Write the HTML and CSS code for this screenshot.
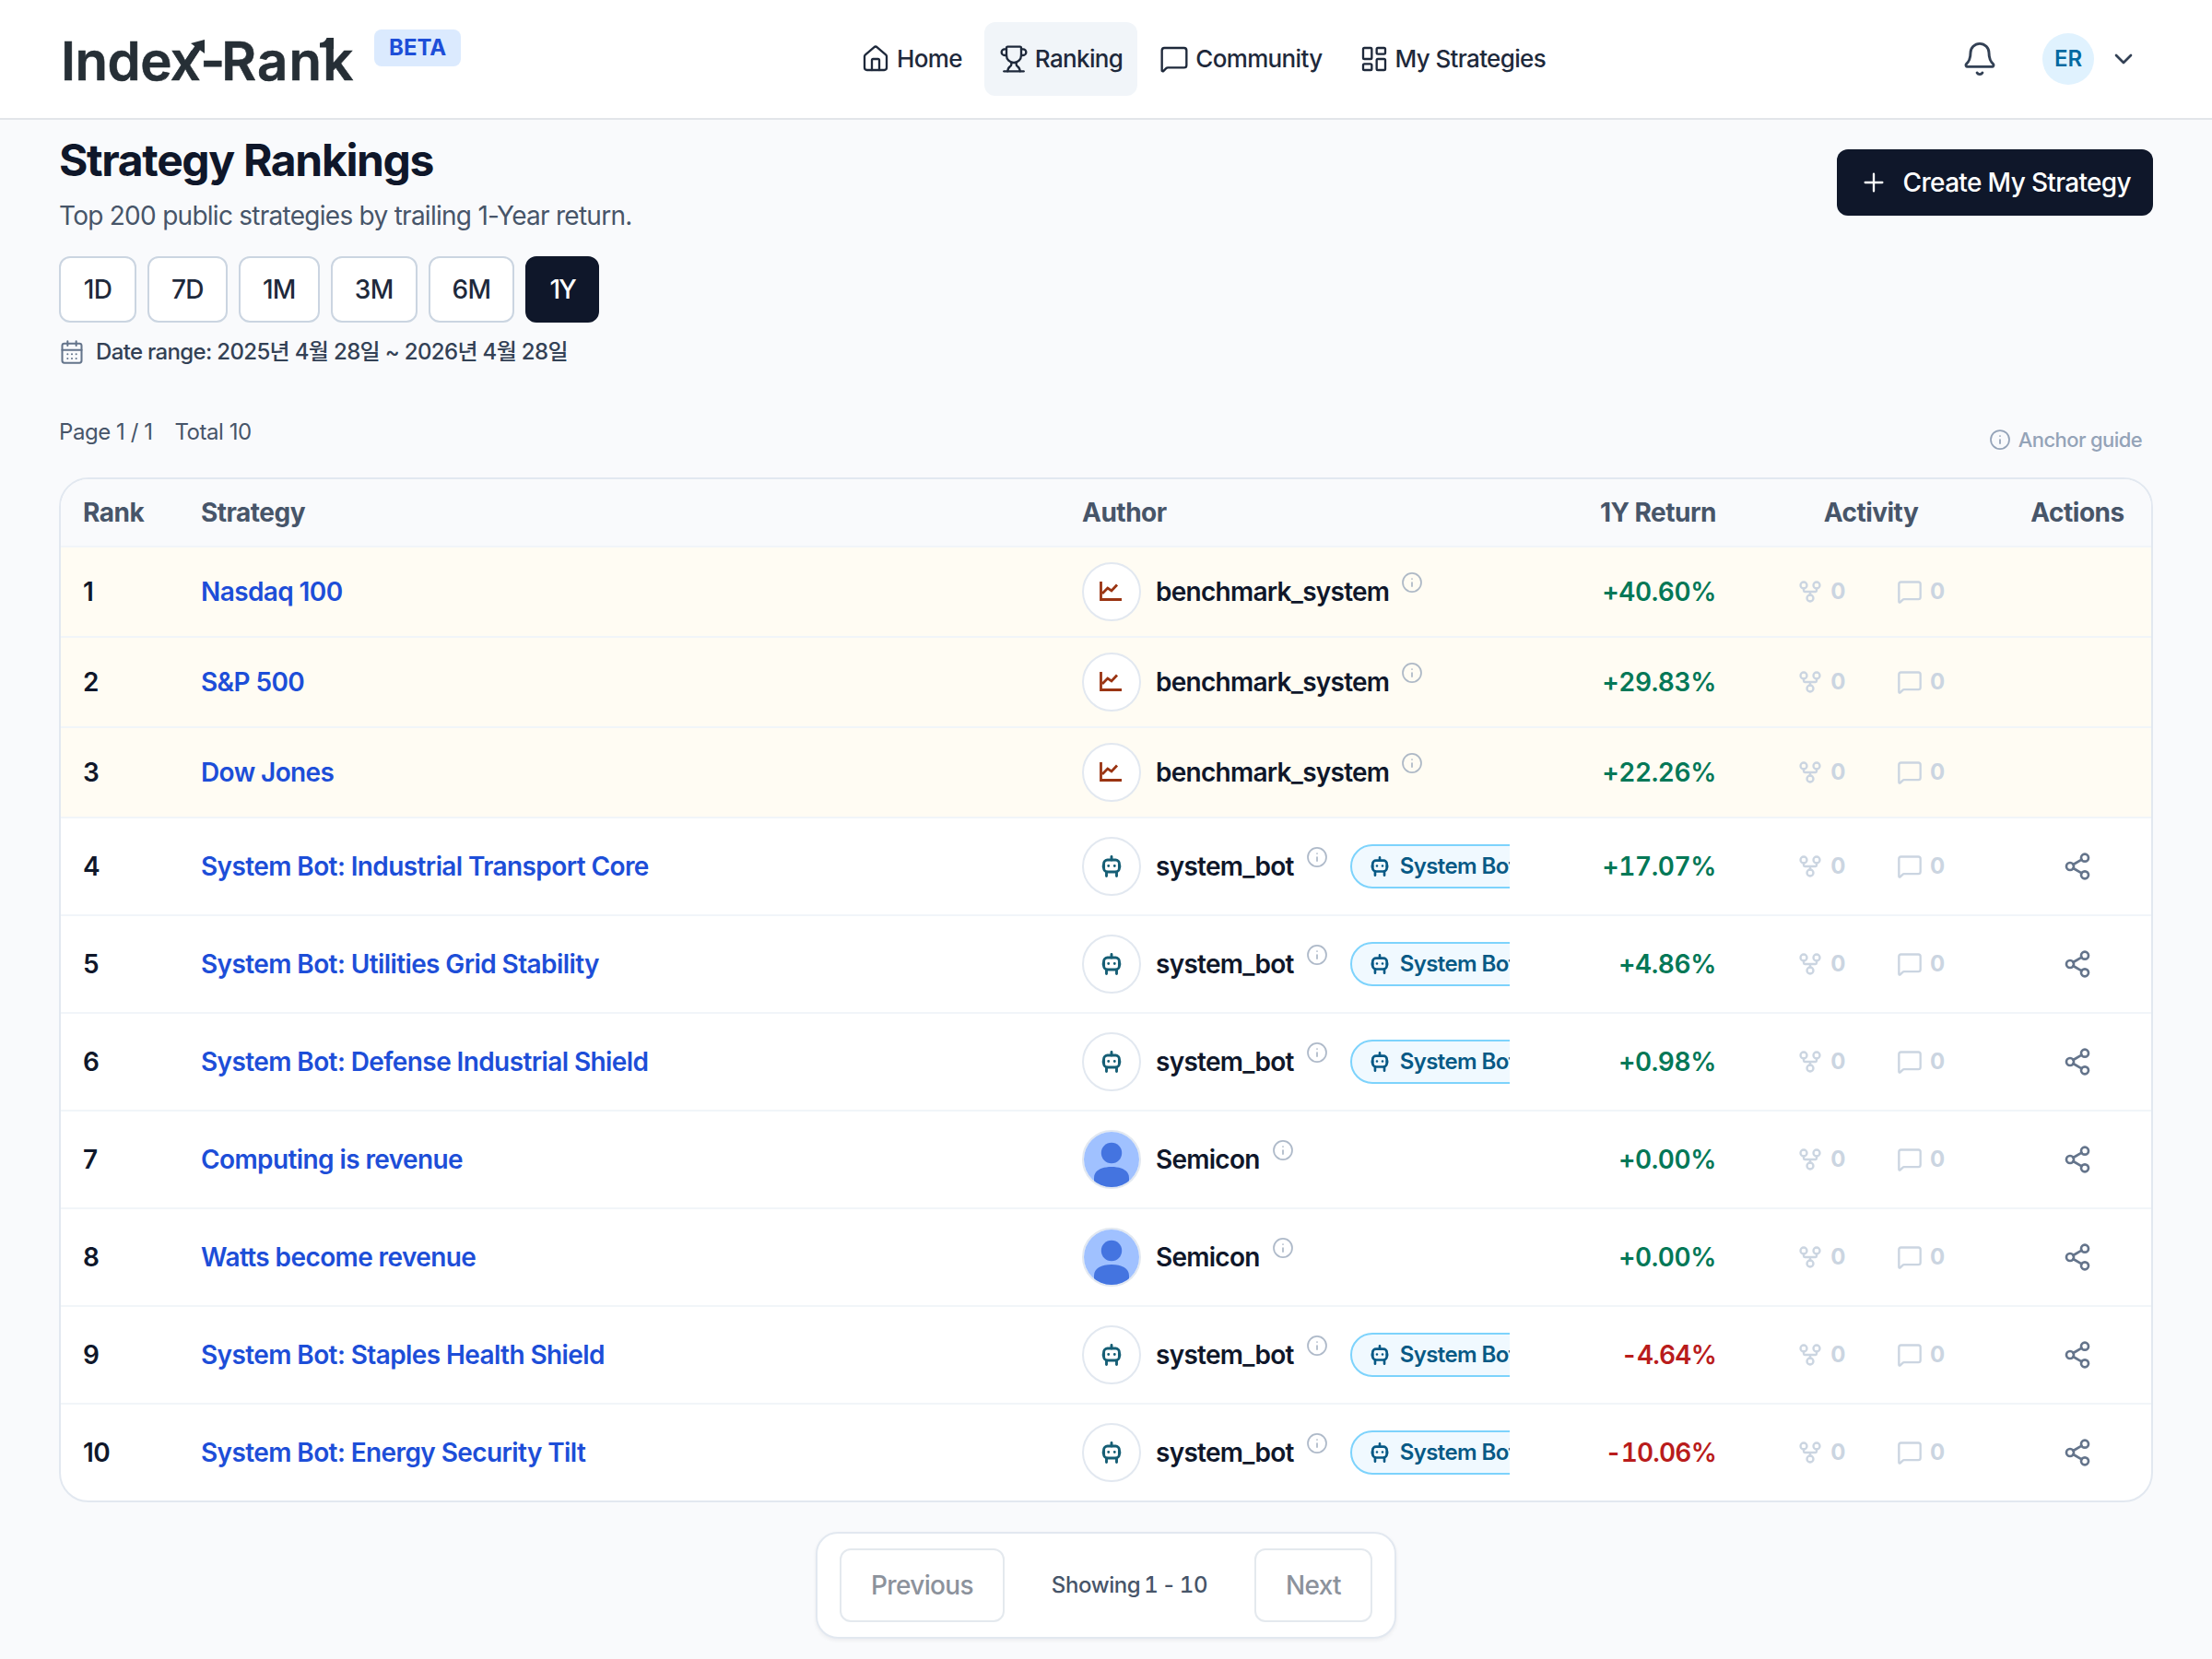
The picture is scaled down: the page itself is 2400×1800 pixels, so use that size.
FILE: index.html
```
<!DOCTYPE html>
<html lang="en">
<head>
  <meta charset="UTF-8">
  <meta name="viewport" content="width=device-width, initial-scale=1.0">
  <title>Index-Rank | Strategy Rankings</title>
  <link rel="stylesheet" href="styles.css">
</head>
<body>
  <!-- Icon sprite -->
  <svg class="sprite" xmlns="http://www.w3.org/2000/svg">
    <symbol id="i-home" viewBox="0 0 24 24"><path d="M15 21v-8a1 1 0 0 0-1-1h-4a1 1 0 0 0-1 1v8"/><path d="M3 10a2 2 0 0 1 .709-1.528l7-6a2 2 0 0 1 2.582 0l7 6A2 2 0 0 1 21 10v9a2 2 0 0 1-2 2H5a2 2 0 0 1-2-2z"/></symbol>
    <symbol id="i-trophy" viewBox="0 0 24 24"><path d="M10 14.66v1.626a2 2 0 0 1-.976 1.696A5 5 0 0 0 7 21.978"/><path d="M14 14.66v1.626a2 2 0 0 0 .976 1.696A5 5 0 0 1 17 21.978"/><path d="M18 9h1.5a1 1 0 0 0 0-5H18"/><path d="M4 22h16"/><path d="M6 9a6 6 0 0 0 12 0V3a1 1 0 0 0-1-1H7a1 1 0 0 0-1 1z"/><path d="M6 9H4.500a1 1 0 0 1 0-5H6"/></symbol>
    <symbol id="i-chat" viewBox="0 0 24 24"><path d="M22 17a2 2 0 0 1-2 2H6.828a2 2 0 0 0-1.414.586l-2.202 2.202A.71.71 0 0 1 2 21.286V5a2 2 0 0 1 2-2h16a2 2 0 0 1 2 2z"/></symbol>
    <symbol id="i-grid" viewBox="0 0 24 24"><rect width="7" height="9" x="3" y="3" rx="1"/><rect width="7" height="5" x="14" y="3" rx="1"/><rect width="7" height="9" x="14" y="12" rx="1"/><rect width="7" height="5" x="3" y="16" rx="1"/></symbol>
    <symbol id="i-bell" viewBox="0 0 24 24"><path d="M10.268 21a2 2 0 0 0 3.464 0"/><path d="M3.262 15.326A1 1 0 0 0 4 17h16a1 1 0 0 0 .74-1.673C19.410 13.956 18 12.499 18 8A6 6 0 0 0 6 8c0 4.499-1.411 5.956-2.738 7.326"/></symbol>
    <symbol id="i-down" viewBox="0 0 24 24"><path d="m6 9 6 6 6-6"/></symbol>
    <symbol id="i-plus" viewBox="0 0 24 24"><path d="M5 12h14M12 5v14"/></symbol>
    <symbol id="i-calendar" viewBox="0 0 24 24"><path d="M8 2v4M16 2v4"/><rect width="18" height="18" x="3" y="4" rx="2"/><path d="M3 10h18M8 14h.01M12 14h.01M16 14h.01M8 18h.01M12 18h.01M16 18h.01"/></symbol>
    <symbol id="i-info" viewBox="0 0 24 24"><circle cx="12" cy="12" r="10"/><path d="M12 16v-4M12 8h.01"/></symbol>
    <symbol id="i-fork" viewBox="0 0 24 24"><circle cx="12" cy="18" r="3"/><circle cx="6" cy="6" r="3"/><circle cx="18" cy="6" r="3"/><path d="M18 9v2c0 .6-.4 1-1 1H7c-.6 0-1-.4-1-1V9M12 12v3"/></symbol>
    <symbol id="i-share" viewBox="0 0 24 24"><circle cx="18" cy="5" r="3"/><circle cx="6" cy="12" r="3"/><circle cx="18" cy="19" r="3"/><path d="m8.590 13.510 6.830 3.980M15.410 6.510l-6.820 3.980"/></symbol>
    <symbol id="i-chart" viewBox="0 0 28 28"><path d="M2.500 3v19.500H25"/><path d="M4 16l5.800-6 4.200 3 6-6.500"/></symbol>
    <symbol id="i-bot" viewBox="0 0 24 24"><rect x="3.600" y="5" width="16.800" height="13" rx="4"/><path d="M12 1.500V5M3.200 11v2M20.800 11v2M6.500 18v4.500M17.500 18v4.500"/><path d="M8.700 11.500h.01M15.300 11.500h.01"/></symbol>
    <symbol id="i-user" viewBox="0 0 60 60"><rect width="60" height="60" fill="#a0c1ff"/><circle cx="30" cy="23" r="11.200" fill="#4474e0"/><path d="M11 60V50c0-8 8-12 19-12s19 4 19 12v10z" fill="#4474e0"/></symbol>
  </svg>

  <header class="topbar">
    <div class="brand">
      <a class="logo" href="#">Inde<span class="logo-x">x<svg class="logo-arrow" viewBox="0 0 24 30"><path d="M2 28L16 8" stroke="#262f36" stroke-width="7"/><path d="M8 4L23 0v15z"/></svg></span><span class="logo-dash">-</span><span class="logo-rank">Ran<span class="logo-k">k<svg class="logo-flag" viewBox="0 0 15 12"><path d="M0 5.500Q6 5 7.500 0H15V12H7V10.500H0z"/></svg></span></span></a>
      <span class="beta">BETA</span>
    </div>
    <nav class="nav">
      <a class="nav-item" href="#"><svg class="icon"><use href="#i-home"/></svg>Home</a>
      <a class="nav-item active" href="#"><svg class="icon"><use href="#i-trophy"/></svg>Ranking</a>
      <a class="nav-item" href="#"><svg class="icon"><use href="#i-chat"/></svg>Community</a>
      <a class="nav-item" href="#"><svg class="icon"><use href="#i-grid"/></svg>My Strategies</a>
    </nav>
    <div class="account">
      <svg class="icon bell"><use href="#i-bell"/></svg>
      <span class="initials">ER</span>
      <svg class="icon"><use href="#i-down"/></svg>
    </div>
  </header>

  <main class="page">
    <div class="page-head">
      <div>
        <h1>Strategy Rankings</h1>
        <p class="subtitle">Top 200 public strategies by trailing 1-Year return.</p>
      </div>
      <button class="create"><svg class="icon"><use href="#i-plus"/></svg>Create My Strategy</button>
    </div>

    <div class="periods">
      <button>1D</button>
      <button>7D</button>
      <button>1M</button>
      <button>3M</button>
      <button>6M</button>
      <button class="active">1Y</button>
    </div>
    <div class="range"><svg class="icon"><use href="#i-calendar"/></svg><span>Date range: 2025년 4월 28일 ~ 2026년 4월 28일</span></div>

    <div class="meta">
      <div class="counts"><span>Page 1 / 1</span><span>Total 10</span></div>
      <div class="guide"><svg class="icon info"><use href="#i-info"/></svg><span>Anchor guide</span></div>
    </div>

    <div class="card">
      <table>
        <colgroup>
          <col class="c-rank"><col class="c-strategy"><col class="c-author"><col class="c-return"><col class="c-activity"><col class="c-actions">
        </colgroup>
        <thead>
          <tr><th>Rank</th><th>Strategy</th><th>Author</th><th class="right">1Y Return</th><th class="center">Activity</th><th class="center">Actions</th></tr>
        </thead>
        <tbody>
          <tr class="bench">
            <td>1</td>
            <td><a href="#">Nasdaq 100</a></td>
            <td><div class="author"><span class="avatar chart"><svg><use href="#i-chart"/></svg></span><span class="name">benchmark_system</span><svg class="icon info"><use href="#i-info"/></svg></div></td>
            <td class="ret up">+40.60%</td>
            <td><div class="activity"><span><svg class="icon"><use href="#i-fork"/></svg>0</span><span><svg class="icon"><use href="#i-chat"/></svg>0</span></div></td>
            <td></td>
          </tr>
          <tr class="bench">
            <td>2</td>
            <td><a href="#">S&amp;P 500</a></td>
            <td><div class="author"><span class="avatar chart"><svg><use href="#i-chart"/></svg></span><span class="name">benchmark_system</span><svg class="icon info"><use href="#i-info"/></svg></div></td>
            <td class="ret up">+29.83%</td>
            <td><div class="activity"><span><svg class="icon"><use href="#i-fork"/></svg>0</span><span><svg class="icon"><use href="#i-chat"/></svg>0</span></div></td>
            <td></td>
          </tr>
          <tr class="bench">
            <td>3</td>
            <td><a href="#">Dow Jones</a></td>
            <td><div class="author"><span class="avatar chart"><svg><use href="#i-chart"/></svg></span><span class="name">benchmark_system</span><svg class="icon info"><use href="#i-info"/></svg></div></td>
            <td class="ret up">+22.26%</td>
            <td><div class="activity"><span><svg class="icon"><use href="#i-fork"/></svg>0</span><span><svg class="icon"><use href="#i-chat"/></svg>0</span></div></td>
            <td></td>
          </tr>
          <tr>
            <td>4</td>
            <td><a href="#">System Bot: Industrial Transport Core</a></td>
            <td><div class="author"><span class="avatar bot"><svg><use href="#i-bot"/></svg></span><span class="name">system_bot</span><svg class="icon info"><use href="#i-info"/></svg><span class="pill"><svg><use href="#i-bot"/></svg>System Bot</span></div></td>
            <td class="ret up">+17.07%</td>
            <td><div class="activity"><span><svg class="icon"><use href="#i-fork"/></svg>0</span><span><svg class="icon"><use href="#i-chat"/></svg>0</span></div></td>
            <td class="share"><svg class="icon"><use href="#i-share"/></svg></td>
          </tr>
          <tr>
            <td>5</td>
            <td><a href="#">System Bot: Utilities Grid Stability</a></td>
            <td><div class="author"><span class="avatar bot"><svg><use href="#i-bot"/></svg></span><span class="name">system_bot</span><svg class="icon info"><use href="#i-info"/></svg><span class="pill"><svg><use href="#i-bot"/></svg>System Bot</span></div></td>
            <td class="ret up">+4.86%</td>
            <td><div class="activity"><span><svg class="icon"><use href="#i-fork"/></svg>0</span><span><svg class="icon"><use href="#i-chat"/></svg>0</span></div></td>
            <td class="share"><svg class="icon"><use href="#i-share"/></svg></td>
          </tr>
          <tr>
            <td>6</td>
            <td><a href="#">System Bot: Defense Industrial Shield</a></td>
            <td><div class="author"><span class="avatar bot"><svg><use href="#i-bot"/></svg></span><span class="name">system_bot</span><svg class="icon info"><use href="#i-info"/></svg><span class="pill"><svg><use href="#i-bot"/></svg>System Bot</span></div></td>
            <td class="ret up">+0.98%</td>
            <td><div class="activity"><span><svg class="icon"><use href="#i-fork"/></svg>0</span><span><svg class="icon"><use href="#i-chat"/></svg>0</span></div></td>
            <td class="share"><svg class="icon"><use href="#i-share"/></svg></td>
          </tr>
          <tr>
            <td>7</td>
            <td><a href="#">Computing is revenue</a></td>
            <td><div class="author"><span class="avatar user"><svg><use href="#i-user"/></svg></span><span class="name">Semicon</span><svg class="icon info"><use href="#i-info"/></svg></div></td>
            <td class="ret up">+0.00%</td>
            <td><div class="activity"><span><svg class="icon"><use href="#i-fork"/></svg>0</span><span><svg class="icon"><use href="#i-chat"/></svg>0</span></div></td>
            <td class="share"><svg class="icon"><use href="#i-share"/></svg></td>
          </tr>
          <tr>
            <td>8</td>
            <td><a href="#">Watts become revenue</a></td>
            <td><div class="author"><span class="avatar user"><svg><use href="#i-user"/></svg></span><span class="name">Semicon</span><svg class="icon info"><use href="#i-info"/></svg></div></td>
            <td class="ret up">+0.00%</td>
            <td><div class="activity"><span><svg class="icon"><use href="#i-fork"/></svg>0</span><span><svg class="icon"><use href="#i-chat"/></svg>0</span></div></td>
            <td class="share"><svg class="icon"><use href="#i-share"/></svg></td>
          </tr>
          <tr>
            <td>9</td>
            <td><a href="#">System Bot: Staples Health Shield</a></td>
            <td><div class="author"><span class="avatar bot"><svg><use href="#i-bot"/></svg></span><span class="name">system_bot</span><svg class="icon info"><use href="#i-info"/></svg><span class="pill"><svg><use href="#i-bot"/></svg>System Bot</span></div></td>
            <td class="ret down">-4.64%</td>
            <td><div class="activity"><span><svg class="icon"><use href="#i-fork"/></svg>0</span><span><svg class="icon"><use href="#i-chat"/></svg>0</span></div></td>
            <td class="share"><svg class="icon"><use href="#i-share"/></svg></td>
          </tr>
          <tr>
            <td>10</td>
            <td><a href="#">System Bot: Energy Security Tilt</a></td>
            <td><div class="author"><span class="avatar bot"><svg><use href="#i-bot"/></svg></span><span class="name">system_bot</span><svg class="icon info"><use href="#i-info"/></svg><span class="pill"><svg><use href="#i-bot"/></svg>System Bot</span></div></td>
            <td class="ret down">-10.06%</td>
            <td><div class="activity"><span><svg class="icon"><use href="#i-fork"/></svg>0</span><span><svg class="icon"><use href="#i-chat"/></svg>0</span></div></td>
            <td class="share"><svg class="icon"><use href="#i-share"/></svg></td>
          </tr>
        </tbody>
      </table>
    </div>

    <div class="pager">
      <button disabled>Previous</button>
      <span>Showing 1 - 10</span>
      <button disabled>Next</button>
    </div>
  </main>
</body>
</html>
```

FILE: styles.css
```
* {
  box-sizing: border-box;
}
body {
  margin: 0;
  min-height: 1800px;
  font-family: Inter, "Noto Sans CJK KR", sans-serif;
  font-size: 28px;
  line-height: 40px;
  letter-spacing: -0.6px;
  color: #0f172a;
  background-color: #f9fafc;
}
h1, p {
  margin: 0;
}
a {
  color: inherit;
  text-decoration: none;
}
button {
  font: inherit;
  font-weight: 500;
  letter-spacing: -0.66px;
}
.sprite {
  display: none;
}
.icon {
  flex: none;
  width: 32px;
  height: 32px;
  fill: none;
  stroke: currentColor;
  stroke-width: 1.75;
  stroke-linecap: round;
  stroke-linejoin: round;
}

/* Top bar */
.topbar {
  display: flex;
  height: 130px;
  padding: 0 80px 0 64px;
  border-bottom: 2px solid #e2e5e9;
  background-color: #fff;
}
.brand {
  display: flex;
  width: 854px;
}
.logo {
  margin-top: 32px;
  width: 342px;
  padding-left: 2px;
  font-size: 58px;
  font-weight: 600;
  line-height: 68px;
  letter-spacing: -0.5px;
  white-space: nowrap;
  color: #262f36;
  -webkit-text-stroke: 0.6px #262f36;
}
.logo-x, .logo-k {
  position: relative;
}
.logo-dash {
  letter-spacing: -4px;
}
.logo-rank {
  letter-spacing: 1.2px;
}
.logo-arrow, .logo-flag {
  position: absolute;
  fill: #262f36;
}
.logo-arrow {
  left: 14px;
  top: 12px;
  width: 24px;
  height: 30px;
}
.logo-flag {
  left: -3px;
  top: 10px;
  width: 15px;
  height: 12px;
}
.beta {
  height: 40px;
  margin-top: 32px;
  padding: 0 16px;
  border-radius: 8px;
  background-color: #dbeafe;
  color: #1d4ed8;
  font-size: 24px;
  font-weight: 700;
  letter-spacing: 0;
}
.nav {
  display: flex;
  gap: 8px;
  padding-top: 24px;
}
.nav-item {
  display: flex;
  align-items: center;
  gap: 7px;
  height: 80px;
  padding: 0 16px;
  border-radius: 12px;
  font-size: 26px;
  font-weight: 500;
  letter-spacing: -0.65px;
  color: #1e293b;
}
.nav-item.active {
  background-color: #f1f5f9;
}
.account {
  display: flex;
  align-items: center;
  gap: 16px;
  height: 128px;
  margin-left: auto;
  color: #334155;
}
.bell {
  width: 40px;
  height: 40px;
  margin-right: 32px;
}
.initials {
  width: 56px;
  height: 56px;
  border-radius: 50%;
  background-color: #e0f2fe;
  color: #0369a1;
  font-size: 24px;
  font-weight: 600;
  line-height: 56px;
  text-align: center;
  letter-spacing: -0.2px;
}
.account .icon:last-child {
  stroke-width: 2;
}

/* Page head */
.page {
  padding: 16px 64px 0;
}
.page-head {
  display: flex;
  justify-content: space-between;
  align-items: flex-start;
}
h1 {
  font-size: 48px;
  font-weight: 700;
  line-height: 56px;
  letter-spacing: -1.35px;
}
.subtitle {
  margin-top: 12px;
  letter-spacing: -0.73px;
  color: #475569;
}
.create {
  display: flex;
  align-items: center;
  gap: 16px;
  height: 72px;
  margin-top: 16px;
  padding: 0 24px;
  border: none;
  border-radius: 12px;
  background-color: #0f172a;
  color: #fff;
}
.periods {
  display: flex;
  gap: 12px;
  margin-top: 24px;
}
.periods button {
  min-width: 84px;
  height: 72px;
  padding: 0 24px;
  border: 2px solid #cbd5e1;
  border-radius: 12px;
  background-color: #fff;
  color: #1e293b;
}
.periods .active {
  min-width: 0;
  border-color: #0f172a;
  background-color: #0f172a;
  color: #fff;
  letter-spacing: -1.8px;
}
.range {
  display: flex;
  align-items: center;
  gap: 12px;
  height: 32px;
  margin-top: 16px;
  font-size: 24px;
  font-weight: 500;
  line-height: 32px;
  letter-spacing: -0.66px;
  color: #334155;
}
.range .icon {
  width: 28px;
  height: 28px;
  color: #64748b;
}
.meta {
  display: flex;
  justify-content: space-between;
  height: 50px;
  margin: 54px 0 16px;
}
.counts {
  display: flex;
  gap: 24px;
  padding-top: 1px;
  font-size: 24px;
  line-height: 32px;
  letter-spacing: -0.45px;
  color: #475569;
}
.guide {
  display: flex;
  align-items: center;
  gap: 8px;
  height: 48px;
  margin: 1px 12px 0 0;
  font-size: 22px;
  font-weight: 500;
  color: #94a3b8;
}
.info {
  width: 24px;
  height: 24px;
  color: #94a3b8;
}

/* Ranking table */
.card {
  overflow: hidden;
  border: 2px solid #e2e8f0;
  border-radius: 32px;
  background-color: #fff;
}
table {
  width: 100%;
  table-layout: fixed;
  border-collapse: separate;
  border-spacing: 0;
}
.c-rank { width: 128px; }
.c-strategy { width: 956px; }
.c-author { width: 512px; }
.c-return { width: 224px; }
.c-activity { width: 288px; }
.c-actions { width: 160px; }
th, td {
  padding: 0 24px;
  border-bottom: 2px solid #f1f5f9;
  text-align: left;
  white-space: nowrap;
}
th {
  height: 74px;
  background-color: #f9fafc;
  color: #475569;
  font-weight: 700;
  letter-spacing: -0.5px;
}
td {
  height: 106px;
  font-weight: 600;
}
.bench td {
  height: 98px;
  background-color: #fffcf3;
}
tbody tr:last-child td {
  height: 104px;
  border-bottom: none;
}
.right {
  text-align: right;
}
.center {
  padding: 0;
  text-align: center;
}
td a {
  color: #1d4ed8;
}
.author {
  display: flex;
  align-items: center;
  overflow: hidden;
}
.name {
  letter-spacing: -0.74px;
}
.author .info {
  margin: 0 24px 20px 13px;
  opacity: 0.75;
}
.avatar {
  display: flex;
  flex: none;
  align-items: center;
  justify-content: center;
  width: 64px;
  height: 64px;
  margin-right: 16px;
  overflow: hidden;
  border: 2px solid #e2e8f0;
  border-radius: 50%;
  background-color: #fff;
}
.chart svg {
  width: 28px;
  height: 28px;
  fill: none;
  stroke: #9a3412;
  stroke-width: 2.8;
}
.bot svg, .pill svg {
  width: 24px;
  height: 24px;
  fill: none;
  stroke: #155e75;
  stroke-width: 2.9;
  stroke-linecap: round;
}
.user svg {
  width: 60px;
  height: 60px;
}
.pill {
  display: flex;
  flex: none;
  align-items: center;
  gap: 11px;
  height: 48px;
  padding: 0 19px;
  border: 2px solid #7dd3fc;
  border-radius: 24px;
  background-color: #f0f9ff;
  color: #075985;
  font-size: 24px;
}
.pill svg {
  width: 22px;
  height: 22px;
  stroke: #075985;
}
.ret {
  text-align: right;
  font-variant-numeric: tabular-nums;
  letter-spacing: -0.4px;
}
.up {
  color: #047857;
}
.down {
  color: #b91c1c;
  letter-spacing: -0.8px;
}
.activity {
  display: flex;
  justify-content: center;
  gap: 56px;
  font-size: 24px;
  font-weight: 700;
  letter-spacing: -0.4px;
  color: #cbd5e1;
}
.activity span {
  display: flex;
  align-items: center;
  gap: 8px;
}
.activity .icon {
  width: 28px;
  height: 28px;
  stroke-width: 2;
}
.share {
  padding: 0;
  text-align: center;
  color: #64748b;
}
.share .icon {
  display: block;
  margin: 0 auto;
  stroke-width: 2;
}

/* Pagination */
.pager {
  display: flex;
  align-items: center;
  justify-content: space-between;
  width: 630px;
  height: 116px;
  margin: 32px auto 0;
  padding: 0 24px;
  border: 2px solid #e2e8f0;
  border-radius: 24px;
  background-color: #fff;
  box-shadow: 0 2px 4px rgba(15, 23, 42, 0.06);
}
.pager button {
  height: 80px;
  padding: 0 32px;
  border: 2px solid #e4e9ee;
  border-radius: 12px;
  background-color: #fff;
  color: #8c929c;
}
.pager span {
  font-size: 24px;
  font-weight: 500;
  font-variant-numeric: tabular-nums;
  letter-spacing: -0.4px;
  word-spacing: -2px;
  color: #475569;
}
```
